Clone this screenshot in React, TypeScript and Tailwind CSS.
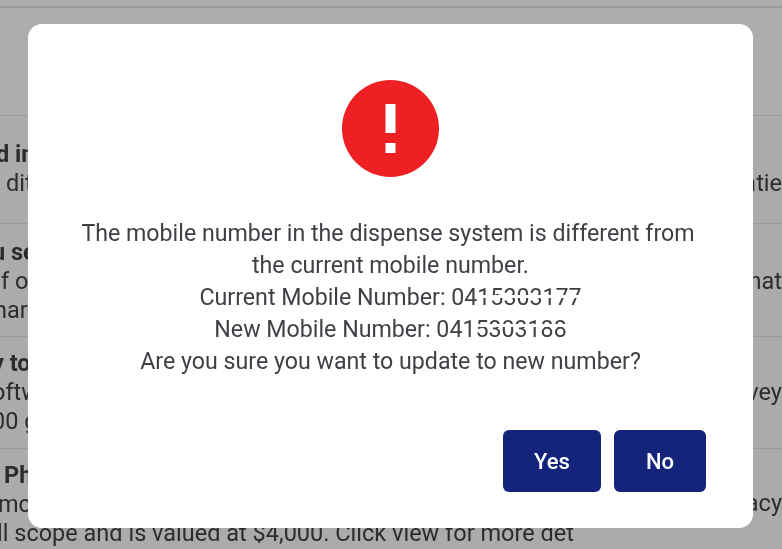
const rows = [
  { top: "d in", lines: [{ text: "dit", indent: "ml-[6px]" }], right: "atie", h: "h-[108px]", pt: "pt-[24px]", indent: "ml-[-4px]" },
  {
    top: "u se",
    lines: [
      { text: "f o", indent: "ml-[1px]" },
      { text: "hare", indent: "ml-[-6px]" },
    ],
    right: "nat",
    h: "h-[113px]",
    pt: "pt-[14px]",
    indent: "ml-[-8px]",
  },
  {
    top: "y to",
    lines: [
      { text: "oftw", indent: "ml-[-8px]" },
      { text: "00 g", indent: "ml-[-8px]" },
    ],
    right: "rvey",
    h: "h-[112px]",
    pt: "pt-[12px]",
    indent: "ml-[-8px]",
  },
];

function Masked({ digits, band }: { digits: string; band: string }) {
  return (
    <span className="relative inline-block">
      {digits}
      <span className={`absolute right-0 h-[3px] bg-white ${band}`} />
    </span>
  );
}

export default function App() {
  return (
    <div className="h-[549px] w-[782px] overflow-hidden bg-[#ababab]">
      <div className="relative h-[549px] w-[782px] font-['Roboto',sans-serif] text-[23.5px] leading-[29px] text-[#2c2c30] blur-[0.5px]">
        <div className="h-[115px] bg-[#adadad] pt-[6px]">
          <div className="h-[2px] bg-[#9c9c9c]" />
        </div>
        {rows.map((row) => (
          <div key={row.top} className={`flex justify-between border-t border-[#9a9a9a] ${row.h} ${row.pt}`}>
            <div className="whitespace-nowrap">
              <p className={`font-bold ${row.indent}`}>{row.top}</p>
              {row.lines.map((line) => (
                <p key={line.text} className={line.indent}>
                  {line.text}
                </p>
              ))}
            </div>
            <p className="whitespace-nowrap pt-[29px]">{row.right}</p>
          </div>
        ))}
        <div className="flex justify-between border-t border-[#9a9a9a] pt-[12px]">
          <div className="whitespace-nowrap">
            <p className="ml-[4px] font-bold">Ph</p>
            <p className="ml-[-2px]">mc</p>
            <p className="ml-[-3px]">ll scope and is valued at $4,000. Click view for more det</p>
          </div>
          <p className="pt-[28px]">acy</p>
        </div>

        <div className="absolute left-[28px] top-[24px] flex h-[504px] w-[725px] flex-col items-center rounded-[14px] bg-white pt-[56px]">
          <svg className="h-[97px] w-[97px]" viewBox="0 0 97 97" aria-hidden="true">
            <circle cx="48.5" cy="48.5" r="48.5" fill="#ee2024" />
            <rect x="43.5" y="24" width="10" height="29" fill="#fff" />
            <rect x="43.5" y="63" width="10" height="10" fill="#fff" />
          </svg>
          <div className="mt-[40px] w-[620px] text-center text-[23.2px] leading-[32px] text-[#3f3f46]">
            <p className="pr-[5px]">The mobile number in the dispense system is different from</p>
            <p>the current mobile number.</p>
            <p>
              Current Mobile Number: <Masked digits="0415303177" band="left-[27px] top-[14px]" />
            </p>
            <p>
              New Mobile Number: <Masked digits="0415303188" band="left-[39px] top-[11px]" />
            </p>
            <p>Are you sure you want to update to new number?</p>
          </div>
          <div className="mt-[53px] flex gap-[13px] self-end pr-[47px]">
            <button className="h-[62px] w-[98px] rounded-[6px] bg-[#13247a] text-[22px] font-medium text-white">Yes</button>
            <button className="h-[62px] w-[92px] rounded-[6px] bg-[#13247a] text-[22px] font-medium text-white">No</button>
          </div>
        </div>
      </div>
    </div>
  );
}
